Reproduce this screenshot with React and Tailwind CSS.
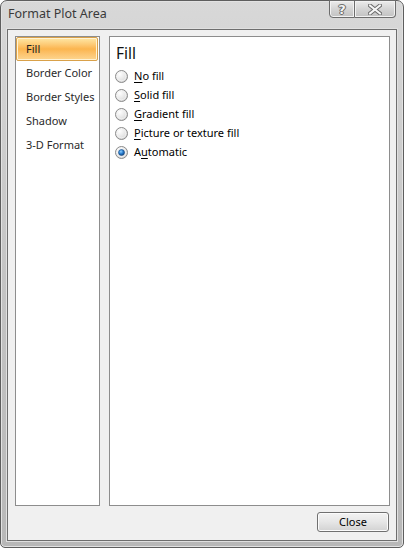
import React from "react";

const font = { fontFamily: '"Noto Sans", "Open Sans", sans-serif' };

function Radio({ checked }) {
  return (
    <svg width="13" height="13" viewBox="0 0 13 13" className="shrink-0">
      <defs>
        <radialGradient id="rg" cx="0.35" cy="0.3" r="0.8">
          <stop offset="0" stopColor="#ffffff" />
          <stop offset="0.6" stopColor="#e6e6e6" />
          <stop offset="1" stopColor="#cacaca" />
        </radialGradient>
        <radialGradient id="rb" cx="0.4" cy="0.35" r="0.7">
          <stop offset="0" stopColor="#8fd0ff" />
          <stop offset="0.5" stopColor="#2a7ed0" />
          <stop offset="1" stopColor="#0c3f7a" />
        </radialGradient>
      </defs>
      <circle cx="6.5" cy="6.5" r="6" fill="url(#rg)" stroke="#8a8a8a" strokeWidth="1" />
      <circle cx="6.5" cy="6.5" r="4.3" fill="none" stroke="#f4f4f4" strokeWidth="0.8" />
      {checked && <circle cx="6.5" cy="6.5" r="3" fill="url(#rb)" stroke="#1b4f88" strokeWidth="0.6" />}
    </svg>
  );
}

function Label({ pre, u, post }) {
  return (
    <span>
      {pre}
      <span className="underline underline-offset-2">{u}</span>
      {post}
    </span>
  );
}

export default function App() {
  const items = ["Fill", "Border Color", "Border Styles", "Shadow", "3-D Format"];
  const radios = [
    { pre: "", u: "N", post: "o fill" },
    { pre: "", u: "S", post: "olid fill" },
    { pre: "", u: "G", post: "radient fill" },
    { pre: "", u: "P", post: "icture or texture fill" },
    { pre: "A", u: "u", post: "tomatic", checked: true },
  ];
  return (
    <div
      className="w-[404px] h-[548px] flex flex-col px-[6px] pb-[6px] border border-[#5e5e5e] rounded-t-[7px] rounded-b-[5px] bg-gradient-to-b from-[#d8d8d8] via-[#c4c4c4] to-[#b8b8b8] shadow-[inset_0_0_0_1px_#e2e2e2]"
      style={font}
    >
      {/* title bar */}
      <div className="h-[28px] flex items-start justify-between shrink-0">
        <div className="pt-[5px] pl-[1px] text-[12.5px] text-[#3a3a3a] leading-[16px]">Format Plot Area</div>
        <div className="flex mr-[1px] mt-[-1px]">
          <div className="w-[26px] h-[18px] border border-[#6c6c6c] rounded-bl-[4px] bg-gradient-to-b from-[#ececec] via-[#d4d4d4] to-[#c2c2c2] shadow-[inset_0_0_0_1px_#f2f2f2] flex items-center justify-center">
            <span
              className="text-[13px] font-bold leading-none text-[#f4f4f4]"
              style={{ fontFamily: '"DejaVu Sans", sans-serif', textShadow: "0 0 1px #555, 0 0 1px #555, 1px 0 0 #777, -1px 0 0 #777, 0 1px 0 #777, 0 -1px 0 #777" }}
            >
              ?
            </span>
          </div>
          <div className="w-[41px] h-[18px] border border-l-0 border-[#6c6c6c] rounded-br-[4px] bg-gradient-to-b from-[#ececec] via-[#d4d4d4] to-[#c2c2c2] shadow-[inset_0_0_0_1px_#f2f2f2] flex items-center justify-center">
            <svg width="14" height="11" viewBox="0 0 14 11">
              <path d="M2 1.5 L12 9.5 M12 1.5 L2 9.5" stroke="#6a6a6a" strokeWidth="4" strokeLinecap="square" />
              <path d="M2 1.5 L12 9.5 M12 1.5 L2 9.5" stroke="#f6f6f6" strokeWidth="2" strokeLinecap="square" />
            </svg>
          </div>
        </div>
      </div>

      {/* client area */}
      <div className="flex-1 flex flex-col border border-[#6e6e6e] bg-[#f0f0f0] shadow-[0_0_0_1px_#e0e0e0] pt-[6px] pl-[7px] pr-[6px] pb-[8px] text-[11px] text-black">
        <div className="flex-1 flex gap-[9px] min-h-0">
          {/* left list */}
          <div className="w-[85px] shrink-0 bg-white border border-[#8d8d8d] flex flex-col pr-[1px]">
            {items.map((it, i) =>
              i === 0 ? (
                <div
                  key={it}
                  className="h-[24px] flex items-center pl-[9px] border border-[#d9a14a] rounded-[2px] bg-gradient-to-b from-[#fee8a6] via-[#fbb54e] to-[#fdd690] shadow-[inset_0_0_0_1px_#fff3d4] text-[#222]"
                >
                  {it}
                </div>
              ) : (
                <div key={it} className="h-[24px] flex items-center pl-[10px] text-[#2a2a2a]">
                  {it}
                </div>
              )
            )}
          </div>
          {/* right pane */}
          <div className="flex-1 bg-white border border-[#8d8d8d] flex flex-col pt-[6px]">
            <div className="pl-[6px] text-[15.5px] leading-[20px] text-[#111]">Fill</div>
            <div className="flex flex-col mt-[4px] pl-[5px]">
              {radios.map((r, i) => (
                <div key={i} className="h-[19px] flex items-center gap-[6px]">
                  <Radio checked={r.checked} />
                  <Label pre={r.pre} u={r.u} post={r.post} />
                </div>
              ))}
            </div>
          </div>
        </div>
        <div className="flex justify-end mt-[6px] pr-[1px]">
          <div className="w-[72px] h-[20px] border border-[#707070] rounded-[3px] bg-gradient-to-b from-[#f3f3f3] via-[#e6e6e6] to-[#d2d2d2] shadow-[inset_0_0_0_1px_#fbfbfb] flex items-center justify-center">
            Close
          </div>
        </div>
      </div>
    </div>
  );
}
